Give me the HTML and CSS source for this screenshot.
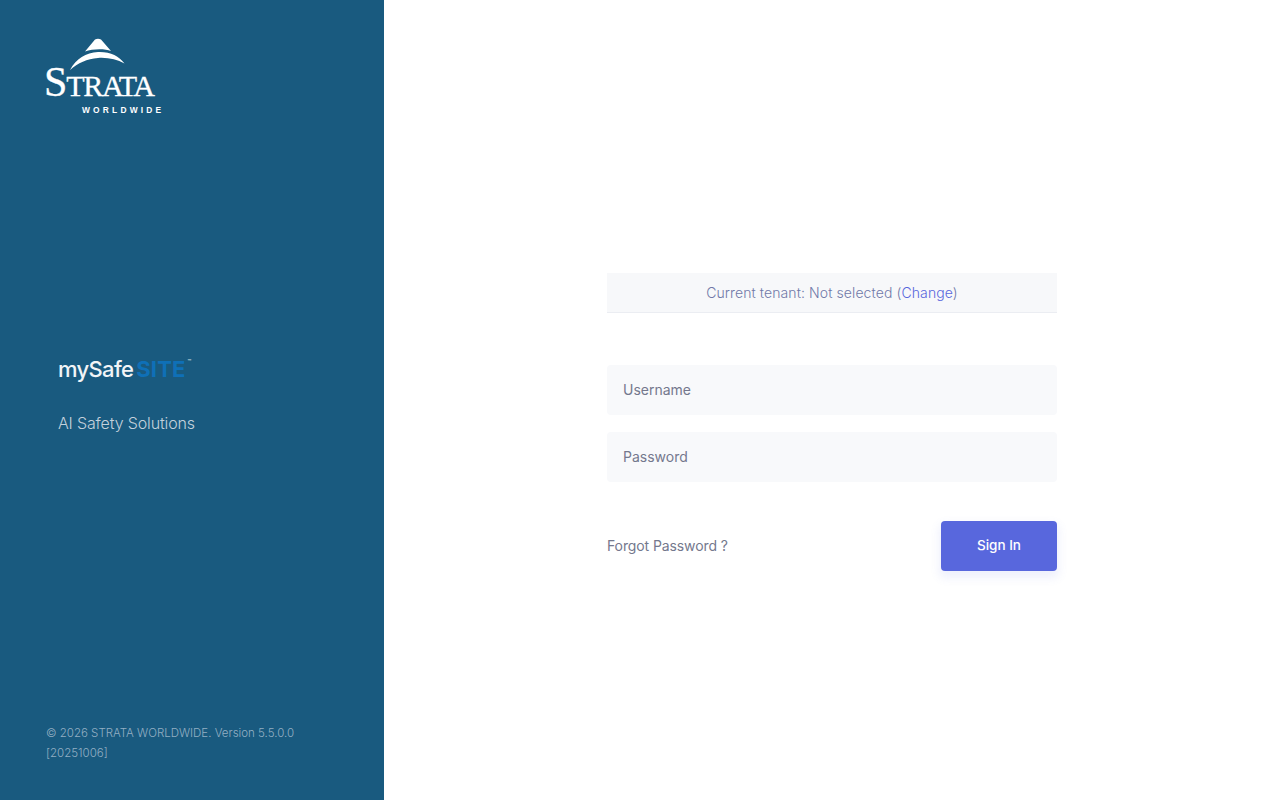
FILE: index.html
```html
<!DOCTYPE html>
<html lang="en">
<head>
<meta charset="utf-8">
<title>Sign In</title>
<link rel="stylesheet" href="styles.css">
</head>
<body>
<div class="page">
  <aside class="aside">
    <div class="logo">
      <svg class="peak" width="60" height="34" viewBox="0 0 60 34" aria-hidden="true">
        <path fill="#fff" d="M26 1.500 C28 0.500 30 0.500 32 1.500 L42 13 C36 10.500 24 10.500 16 13.500 Z"/>
        <path fill="#fff" d="M1 32 C7 21 17 14.500 29 14 C41 13.500 50 18 55.500 25.500 C48 21.500 39 19.300 29 20 C18 20.700 9 25 1 32 Z"/>
      </svg>
      <div class="strata"><span class="strata-big">S</span>TRATA</div>
      <div class="worldwide">WORLDWIDE</div>
    </div>
    <div class="brand">
      <div class="product"><span class="my">mySafe</span><span class="site">SITE</span><span class="tm">™</span></div>
      <div class="tagline">AI Safety Solutions</div>
    </div>
    <div class="copyright">© 2026 STRATA WORLDWIDE. Version 5.5.0.0 [20251006]</div>
  </aside>
  <main class="main">
    <div class="panel">
      <div class="tenant">Current tenant: Not selected (<a class="tenant-link" href="#">Change</a>)</div>
      <form class="form">
        <input class="field" type="text" placeholder="Username">
        <input class="field" type="password" placeholder="Password">
        <div class="actions">
          <a class="forgot" href="#">Forgot Password ?</a>
          <button class="submit" type="button">Sign In</button>
        </div>
      </form>
    </div>
  </main>
</div>
</body>
</html>
```
FILE: styles.css
```css
* { box-sizing: border-box; }
html, body { margin: 0; height: 100%; background: #fff; }
body { font-family: "Inter", "Noto Sans", sans-serif; }
.page { display: flex; height: 800px; overflow: hidden; }
.aside {
  width: 384px; flex: none; background: #195a7f;
  display: flex; flex-direction: column;
  padding: 38px 46px 37px 45px;
}
.logo { width: 120px; height: 77px; color: #fff; display: flex; flex-direction: column; }
.peak { display: block; margin-left: 24px; margin-bottom: -3px; flex: none; }
.strata { font-family: "Liberation Serif", serif; font-size: 30px; line-height: 26px; letter-spacing: -1.400px; margin-left: -1px; white-space: nowrap; -webkit-text-stroke: 0.3px #fff; }
.strata-big { font-size: 42px; letter-spacing: -1px; }
.worldwide { font-family: "Liberation Sans", sans-serif; font-weight: 700; font-size: 8.400px; line-height: 9px; letter-spacing: 3.200px; margin: 7px 0 0 37px; white-space: nowrap; }
.brand { margin: 241px 0 0 13px; }
.product { font-size: 22px; line-height: 27px; height: 28px; font-weight: 500; color: #f1f4f7; letter-spacing: -0.650px; display: flex; }
.site { color: #0f70b7; font-weight: 700; margin-left: 3px; letter-spacing: 0.100px; }
.tm { font-size: 6px; line-height: 12px; color: #dfe6ec; margin-left: 2px; }
.tagline { margin-top: 26px; font-size: 16px; line-height: 26px; font-weight: 300; color: #c3d1dc; letter-spacing: -0.150px; }
.copyright { margin: auto 0 0 1px; font-size: 11.500px; line-height: 20px; color: #93afc3; font-weight: 300; width: 280px; }
.main { flex: 1; display: flex; justify-content: center; padding-top: 273px; }
.panel { width: 450px; }
.tenant {
  height: 40px; background: #f7f8fa; border-bottom: 1px solid #ebedf2;
  font-size: 14px; line-height: 39px; text-align: center; color: #7079a8; font-weight: 300; letter-spacing: 0.100px;
}
.tenant-link { color: #5867dd; text-decoration: none; }
.form { display: flex; flex-direction: column; padding-top: 52px; }
.field {
  display: block; width: 100%; height: 50px; border: 0; background: #f8f9fb; border-radius: 4px;
  padding: 0 16px 2px; margin-bottom: 17px; font: 14px "Inter", sans-serif; color: #575962; outline: 0;
}
.field::placeholder { color: #74788d; opacity: 1; }
.actions { display: flex; justify-content: space-between; align-items: center; margin-top: 22px; }
.forgot { font-size: 14px; color: #74788d; text-decoration: none; letter-spacing: -0.100px; padding-bottom: 2px; }
.submit {
  width: 116px; height: 50px; border: 0; border-radius: 4px; background: #5867dd; color: #fff;
  font: 500 13.500px "Inter", sans-serif; box-shadow: 0 5px 10px 2px rgba(88,103,221,0.10); padding: 0 0 2px;
}
```
